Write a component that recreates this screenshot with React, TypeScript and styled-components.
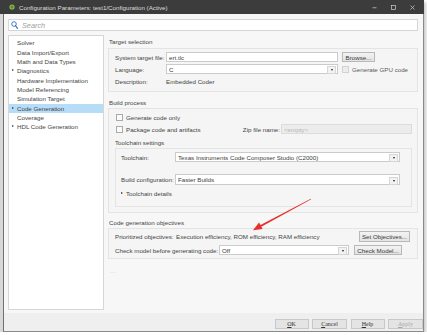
import React from "react"
import styled, { createGlobalStyle } from "styled-components"

const GlobalStyle = createGlobalStyle`
  html, body {
    margin: 0;
    padding: 0;
    background: #ffffff;
  }
  body {
    font-family: "Liberation Sans", Arial, sans-serif;
    font-size: 6.2px;
    color: #444444;
  }
`

const Window = styled.div`
  position: relative;
  width: 424px;
  height: 332px;
  display: flex;
  flex-direction: column;
  background: #d8d8d8;
  box-shadow: 2px 2px 3px rgba(0, 0, 0, 0.22);
`

const TitleBar = styled.div`
  height: 14px;
  flex-shrink: 0;
  display: flex;
  align-items: center;
  padding: 0 6px 0 9px;
  background: #3c3c3c;
  color: #dedede;
`

const TitleText = styled.span`
  margin-left: 4px;
  flex: 1;
  white-space: nowrap;
`

const WinControls = styled.div`
  display: flex;
  align-items: center;
  gap: 14px;
  margin-right: 3px;
`

const Body = styled.div`
  flex: 1;
  min-height: 0;
  margin-left: 3px;
  border-left: 1px solid #707070;
  border-right: 1px solid #8a8a8a;
  border-bottom: 1px solid #8a8a8a;
  background: #f7f7f7;
  display: flex;
  flex-direction: column;
`

const SearchBox = styled.div`
  height: 12px;
  margin: 5px 5px 0 4px;
  box-sizing: border-box;
  border: 1px solid #d6d6d6;
  background: #ffffff;
  display: flex;
  align-items: center;
  padding-left: 2px;
  gap: 4px;
`

const SearchPlaceholder = styled.span`
  font-size: 7.3px;
  font-style: italic;
  color: #a0a0a0;
`

const Main = styled.div`
  flex: 1;
  min-height: 0;
  display: flex;
  margin-top: 4px;
`

const Tree = styled.div`
  width: 96px;
  box-sizing: border-box;
  margin: 0 0 3px 4px;
  border: 1px solid #d6d6d6;
  background: #ffffff;
  padding-top: 2.3px;
`

const TreeItem = styled.div<{ $selected?: boolean }>`
  height: 9.33px;
  display: flex;
  align-items: center;
  position: relative;
  padding-left: 8px;
  white-space: nowrap;
  background: ${p => (p.$selected ? "#b7dcf7" : "transparent")};
`

const Caret = styled.span`
  position: absolute;
  left: 3px;
  top: 3.2px;
  width: 0;
  height: 0;
  border-top: 1.6px solid transparent;
  border-bottom: 1.6px solid transparent;
  border-left: 2.4px solid #2b3a55;
`

const Content = styled.div`
  flex: 1;
  min-width: 0;
  padding: 3px 5px 0 4px;
  display: flex;
  flex-direction: column;
`

const SectionLabel = styled.div<{ $top?: number }>`
  height: 8px;
  line-height: 8px;
  padding-left: 1px;
  margin-top: ${p => p.$top ?? 0}px;
  margin-bottom: ${p => (p.$top === undefined ? 2 : 1)}px;
  white-space: nowrap;
`

const GroupBox = styled.div<{ $pad: string }>`
  box-sizing: border-box;
  border: 1px solid #e4e4e4;
  background: #f5f5f5;
  padding: ${p => p.$pad};
  display: flex;
  flex-direction: column;
`

const Row = styled.div<{ $h?: number; $top?: number }>`
  height: ${p => p.$h ?? 12}px;
  margin-top: ${p => p.$top ?? 0}px;
  display: flex;
  align-items: center;
  white-space: nowrap;
`

const FieldLabel = styled.span<{ $w: number }>`
  width: ${p => p.$w}px;
  flex-shrink: 0;
`

const TextField = styled.div<{ $w: number; $disabled?: boolean }>`
  width: ${p => p.$w}px;
  height: 10px;
  box-sizing: border-box;
  border: 1px solid ${p => (p.$disabled ? "#dcdcdc" : "#cbcbcb")};
  background: ${p => (p.$disabled ? "#ececec" : "#ffffff")};
  color: ${p => (p.$disabled ? "#b4b4b4" : "#404040")};
  padding-left: 2px;
  display: flex;
  align-items: center;
  flex-shrink: 0;
`

const Select = styled(TextField)`
  position: relative;
  padding-right: 11px;
`

const DropArrow = styled.span`
  position: absolute;
  right: 1px;
  top: 1px;
  width: 7px;
  height: 6px;
  border: 1px solid #d6d6d6;
  background: #f2f2f2;
  display: flex;
  align-items: center;
  justify-content: center;
  &::after {
    content: "";
    width: 0;
    height: 0;
    border-left: 1.6px solid transparent;
    border-right: 1.6px solid transparent;
    border-top: 2px solid #222222;
  }
`

const Button = styled.div<{ $w: number; $h?: number; $left?: string }>`
  width: ${p => p.$w}px;
  height: ${p => p.$h ?? 10}px;
  margin-left: ${p => p.$left ?? "0"};
  box-sizing: border-box;
  border: 1px solid #b8b8b8;
  background: linear-gradient(#f3f3f3, #e3e3e3);
  display: flex;
  align-items: center;
  justify-content: center;
  flex-shrink: 0;
  color: #3a3a3a;
`

const CheckBox = styled.span<{ $disabled?: boolean }>`
  width: 7px;
  height: 7px;
  box-sizing: border-box;
  border: 1px solid ${p => (p.$disabled ? "#d2d2d2" : "#aaaaaa")};
  background: ${p => (p.$disabled ? "#ececec" : "#fafafa")};
  margin-right: 3px;
  flex-shrink: 0;
`

const Muted = styled.span`
  color: #5a5a5a;
`

const Expander = styled.span`
  display: flex;
  align-items: center;
  gap: 3px;
  &::before {
    content: "";
    width: 0;
    height: 0;
    border-top: 1.6px solid transparent;
    border-bottom: 1.6px solid transparent;
    border-left: 2.4px solid #333333;
  }
`

const Ellipsis = styled.div`
  margin: 8px 0 0 2px;
  color: #bcbcbc;
  letter-spacing: 0.5px;
`

const Footer = styled.div`
  height: 18px;
  flex-shrink: 0;
  background: #efefef;
  display: flex;
  justify-content: flex-end;
  align-items: flex-start;
  gap: 3.5px;
  padding: 6px 0 0 0;
  box-sizing: border-box;
`

const FooterButton = styled.div<{ $w: number; $disabled?: boolean }>`
  width: ${p => p.$w}px;
  height: 10px;
  box-sizing: border-box;
  border: 1px solid #c8c8c8;
  background: #e4e4e4;
  display: flex;
  align-items: center;
  justify-content: center;
  font-family: "Liberation Serif", "Times New Roman", serif;
  font-size: 6px;
  color: ${p => (p.$disabled ? "#a8a8a8" : "#333333")};
  & u {
    text-decoration: underline;
  }
`

const Overlay = styled.svg`
  position: absolute;
  left: 0;
  top: 0;
  pointer-events: none;
`

const treeItems: { label: string; caret?: boolean; selected?: boolean }[] = [
  { label: "Solver" },
  { label: "Data Import/Export" },
  { label: "Math and Data Types" },
  { label: "Diagnostics", caret: true },
  { label: "Hardware Implementation" },
  { label: "Model Referencing" },
  { label: "Simulation Target" },
  { label: "Code Generation", caret: true, selected: true },
  { label: "Coverage" },
  { label: "HDL Code Generation", caret: true },
]

const AppIcon = () => (
  <svg width="6" height="6" viewBox="0 0 12 12">
    <circle cx="6" cy="6" r="5.2" fill="#7fbf3f" />
    <circle cx="6" cy="6" r="2.6" fill="#3c3c3c" />
    <circle cx="6" cy="6" r="1.3" fill="#cfe9a8" />
  </svg>
)

const SearchIcon = () => (
  <svg width="7" height="8" viewBox="0 0 14 16">
    <circle cx="6" cy="6" r="4.6" fill="none" stroke="#2f6fbf" strokeWidth="1.8" />
    <path d="M9.2 9.6 L13 14.6" stroke="#2f6fbf" strokeWidth="2.2" strokeLinecap="round" />
  </svg>
)

const MinIcon = () => (
  <svg width="5" height="5" viewBox="0 0 10 10">
    <path d="M1 5.5 H9" stroke="#cfcfcf" strokeWidth="1.4" />
  </svg>
)
const MaxIcon = () => (
  <svg width="5" height="5" viewBox="0 0 10 10">
    <rect x="1" y="1" width="8" height="8" fill="none" stroke="#cfcfcf" strokeWidth="1.4" />
  </svg>
)
const CloseIcon = () => (
  <svg width="5" height="5" viewBox="0 0 10 10">
    <path d="M1 1 L9 9 M9 1 L1 9" stroke="#cfcfcf" strokeWidth="1.4" />
  </svg>
)

export default function App() {
  return (
    <>
      <GlobalStyle />
      <Window>
        <TitleBar>
          <AppIcon />
          <TitleText>Configuration Parameters: test1/Configuration (Active)</TitleText>
          <WinControls>
            <MinIcon />
            <MaxIcon />
            <CloseIcon />
          </WinControls>
        </TitleBar>
        <Body>
          <SearchBox>
            <SearchIcon />
            <SearchPlaceholder>Search</SearchPlaceholder>
          </SearchBox>
          <Main>
            <Tree>
              {treeItems.map(item => (
                <TreeItem key={item.label} $selected={item.selected}>
                  {item.caret && <Caret />}
                  {item.label}
                </TreeItem>
              ))}
            </Tree>
            <Content>
              <SectionLabel>Target selection</SectionLabel>
              <GroupBox $pad="2px 5px 4px 6px">
                <Row>
                  <FieldLabel $w={51}>System target file:</FieldLabel>
                  <TextField $w={172}>ert.tlc</TextField>
                  <Button $w={33} $left="4px">Browse...</Button>
                </Row>
                <Row>
                  <FieldLabel $w={51}>Language:</FieldLabel>
                  <Select $w={172}>
                    C
                    <DropArrow />
                  </Select>
                  <CheckBox $disabled style={{ marginLeft: 4 }} />
                  <Muted>Generate GPU code</Muted>
                </Row>
                <Row>
                  <FieldLabel $w={51}>Description:</FieldLabel>
                  <span>Embedded Coder</span>
                </Row>
              </GroupBox>

              <SectionLabel $top={7}>Build process</SectionLabel>
              <GroupBox $pad="3px 5px 5px 6px">
                <Row $h={10}>
                  <CheckBox style={{ marginLeft: 1 }} />
                  Generate code only
                </Row>
                <Row $h={10} $top={2}>
                  <CheckBox style={{ marginLeft: 1 }} />
                  Package code and artifacts
                  <span style={{ marginLeft: "auto", marginRight: 1 }}>Zip file name:</span>
                  <TextField $w={131} $disabled>&lt;empty&gt;</TextField>
                </Row>
                <SectionLabel $top={5} style={{ paddingLeft: 0 }}>
                  Toolchain settings
                </SectionLabel>
                <GroupBox $pad="3px 6px 8px 5px">
                  <Row $h={10}>
                    <FieldLabel $w={54}>Toolchain:</FieldLabel>
                    <Select $w={225}>
                      Texas Instruments Code Composer Studio (C2000)
                      <DropArrow />
                    </Select>
                  </Row>
                  <Row $h={11} $top={12}>
                    <FieldLabel $w={54}>Build configuration:</FieldLabel>
                    <Select $w={225} style={{ height: 11 }}>
                      Faster Builds
                      <DropArrow style={{ top: 1.5 }} />
                    </Select>
                  </Row>
                  <Row $h={10} $top={3}>
                    <Expander>Toolchain details</Expander>
                  </Row>
                </GroupBox>
              </GroupBox>

              <SectionLabel $top={6}>Code generation objectives</SectionLabel>
              <GroupBox $pad="2px 7px 3px 6px">
                <Row $h={11}>
                  <FieldLabel $w={61}>Prioritized objectives:</FieldLabel>
                  <span>Execution efficiency, ROM efficiency, RAM efficiency</span>
                  <Button $w={51} $h={11} $left="auto">Set Objectives...</Button>
                </Row>
                <Row $h={10} $top={3}>
                  <FieldLabel $w={104}>Check model before generating code:</FieldLabel>
                  <Select $w={130}>
                    Off
                    <DropArrow />
                  </Select>
                  <Button $w={48} $left="5px">Check Model...</Button>
                </Row>
              </GroupBox>
              <Ellipsis>...</Ellipsis>
            </Content>
          </Main>
          <Footer>
            <FooterButton $w={34}>
              <u>O</u>K
            </FooterButton>
            <FooterButton $w={35}>
              <u>C</u>ancel
            </FooterButton>
            <FooterButton $w={34}>
              <u>H</u>elp
            </FooterButton>
            <FooterButton $w={35} $disabled>
              <u>A</u>pply
            </FooterButton>
          </Footer>
        </Body>
        <Overlay width="427" height="335" viewBox="0 0 427 335">
          <polygon
            points="311.2,199.3 261.3,226.7 262.6,229.1 253,230.3 259.1,222.6 260.5,224.9 310.8,198.7"
            fill="#e8302a"
          />
        </Overlay>
      </Window>
    </>
  )
}
